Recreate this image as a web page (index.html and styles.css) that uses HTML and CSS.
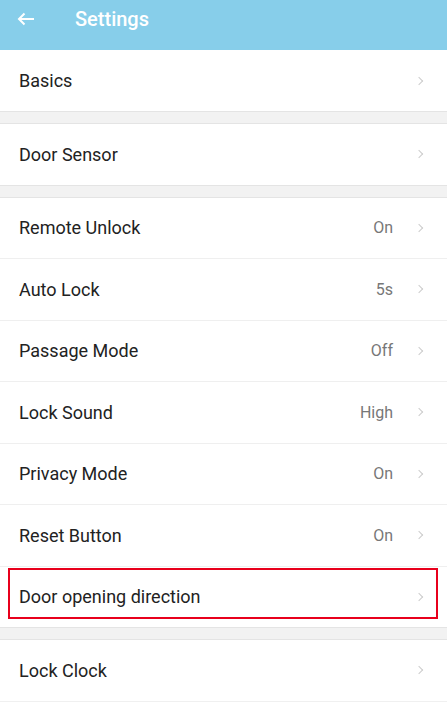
FILE: index.html
```html
<!doctype html>
<html>
<head>
<meta charset="utf-8">
<title>Settings</title>
<link rel="stylesheet" href="styles.css">
</head>
<body>
<div class="page">
	<div class="topbar">
		<span class="back">
			<svg width="18" height="14" viewBox="0 0 18 14"><path d="M17 7H2M7.5 1.5L2 7l5.5 5.5" fill="none" stroke="#fff" stroke-width="2"/></svg>
		</span>
		<span class="title">Settings</span>
	</div>

	<ul class="group first">
		<li class="item"><span class="label">Basics</span><i class="arrow"></i></li>
	</ul>
	<ul class="group">
		<li class="item"><span class="label">Door Sensor</span><i class="arrow"></i></li>
	</ul>
	<ul class="group">
		<li class="item"><span class="label">Remote Unlock</span><span class="value">On</span><i class="arrow"></i></li>
		<li class="item"><span class="label">Auto Lock</span><span class="value">5s</span><i class="arrow"></i></li>
		<li class="item"><span class="label">Passage Mode</span><span class="value">Off</span><i class="arrow"></i></li>
		<li class="item"><span class="label">Lock Sound</span><span class="value">High</span><i class="arrow"></i></li>
		<li class="item"><span class="label">Privacy Mode</span><span class="value">On</span><i class="arrow"></i></li>
		<li class="item"><span class="label">Reset Button</span><span class="value">On</span><i class="arrow"></i></li>
		<li class="item mark"><span class="label">Door opening direction</span><i class="arrow"></i></li>
	</ul>
	<ul class="group last">
		<li class="item"><span class="label">Lock Clock</span><i class="arrow"></i></li>
	</ul>
</div>
</body>
</html>
```

FILE: styles.css
```css
html,body,ul,li{margin:0;padding:0;}
ul,li{list-style:none;}
body{background:#fff;font-family:Roboto,"Noto Sans",Arial,sans-serif;color:#222;}
.page{width:447px;overflow:hidden;background:#f2f2f2;}

.topbar{height:38px;padding-bottom:12px;background:#87ceea;display:flex;align-items:center;}
.topbar .back{width:18px;height:14px;margin-left:17px;display:flex;}
.topbar .title{margin-left:40px;color:#fff;font-size:20px;font-weight:500;}

.group{background:#fff;border-top:1px solid #e4e4e4;border-bottom:1px solid #e4e4e4;margin-bottom:11px;}
.group.first{border-top:none;}
.group.first .item:first-child{height:61px;}
.group.last{margin-bottom:0;border-bottom-color:#f0f0f0;}

.item{height:61.5px;border-top:1px solid #efefef;display:flex;align-items:center;padding:0 20px 0 19px;font-size:18px;box-sizing:border-box;}
.item:first-child{border-top:none;height:60.5px;}
.item .label{flex:1;}
.item .value{color:#777;font-size:16px;margin-right:23px;}
.item .arrow{width:5px;height:5px;border-top:1px solid #ccc;border-right:1px solid #ccc;transform:rotate(45deg);margin-right:5px;}

.item.mark{position:relative;}
.item.mark::after{content:"";position:absolute;left:8px;right:9px;top:1px;bottom:8px;border:2px solid #e8001c;}
```
